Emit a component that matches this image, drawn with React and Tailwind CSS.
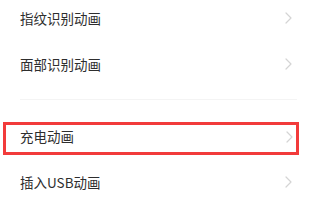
const Chevron = () => (
  <svg width="7" height="12" viewBox="0 0 7 12" fill="none">
    <path d="M1 1l5 5-5 5" stroke="#d4d4d4" strokeWidth="1.2" strokeLinecap="round" strokeLinejoin="round" />
  </svg>
);

const font = { fontFamily: '"Noto Sans CJK SC", "Noto Sans", sans-serif' };

export default function App() {
  return (
    <div className="w-[312px] h-[210px] bg-white overflow-hidden text-[13.5px] text-[#2e2e2e]" style={font}>
      <div className="h-[36px] flex items-center justify-between pl-[20px] pr-[20px]">
        <span>指纹识别动画</span>
        <Chevron />
      </div>
      <div className="h-[56px] flex items-center justify-between pl-[20px] pr-[20px]">
        <span>面部识别动画</span>
        <Chevron />
      </div>
      <div className="mt-[7px] ml-[20px] mr-[15px] h-px bg-[#f4f4f4]" />
      <div className="h-[22px]" />
      <div className="ml-[3px] w-[296px] h-[33px] border-[3px] border-[#f23b3b] flex items-center justify-between pl-[14px] pr-[3px] pb-[4px]">
        <span>充电动画</span>
        <Chevron />
      </div>
      <div className="h-[54px] flex items-center justify-between pl-[20px] pr-[20px]">
        <span>插入USB动画</span>
        <Chevron />
      </div>
    </div>
  );
}
